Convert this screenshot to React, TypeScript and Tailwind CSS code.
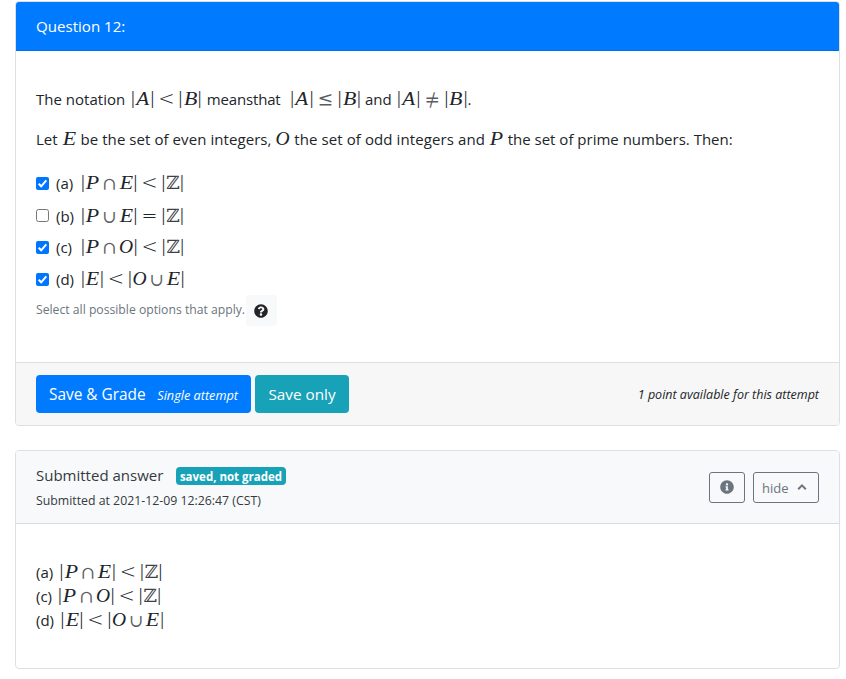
import React from "react";

const slots: Record<string, string> = {
  "|": "w-[4px] text-[19px] font-normal relative -top-px",
  A: "w-[15.5px] italic scale-x-108",
  B: "w-[15.2px] italic scale-x-112",
  E: "w-[15px] italic scale-x-112",
  O: "w-[15.2px] italic",
  P: "w-[15px] italic scale-x-112",
  ℤ: "w-[14.5px] font-['DejaVu_Math_TeX_Gyre','DejaVu_Sans'] text-[18.5px] text-[#3c4044]",
  "<": "w-[24px] font-['DejaVu_Sans'] text-[19.5px] font-extralight",
  "≤": "w-[24px] font-['DejaVu_Math_TeX_Gyre','DejaVu_Sans'] text-[18.5px] text-[#5a5e62]",
  "≠": "w-[24px] font-['DejaVu_Math_TeX_Gyre','DejaVu_Sans'] text-[18.5px] text-[#5a5e62]",
  "=": "w-[24px] font-['DejaVu_Sans'] text-[19px] font-extralight",
  "∩": "w-[18.5px] font-['DejaVu_Math_TeX_Gyre','DejaVu_Sans'] text-[17px] text-[#5a5e62]",
  "∪": "w-[18.5px] font-['DejaVu_Math_TeX_Gyre','DejaVu_Sans'] text-[17px] text-[#5a5e62]",
};

function Tex({ children }: { children: string }) {
  return (
    <span className="inline-flex h-6 shrink-0 items-baseline font-['Liberation_Serif',serif] text-[19.5px] leading-6 tracking-normal">
      {Array.from(children).map((c, i) => (
        <span key={i} className={`flex h-6 shrink-0 justify-center leading-6 ${slots[c]}`}>{c}</span>
      ))}
    </span>
  );
}

function Check({ on }: { on?: boolean }) {
  return on ? (
    <svg viewBox="0 0 13 13" className="h-[13px] w-[13px]">
      <rect width="13" height="13" rx="2" fill="#0075ff" />
      <path d="M2.7 6.8 5.2 9.3 10.3 3.4" fill="none" stroke="#fff" strokeWidth="2" />
    </svg>
  ) : (
    <span className="h-[13px] w-[13px] rounded-[2.5px] border border-[#767676] bg-white" />
  );
}

function Option({ label, tex, on }: { label: string; tex: string; on?: boolean }) {
  return (
    <div className="flex h-8 items-center">
      <Check on={on} />
      <div className="ml-[7px] flex h-6 items-baseline">
        <span className="w-[25px] text-[15px] leading-6">{label}</span>
        <Tex>{tex}</Tex>
      </div>
    </div>
  );
}

function Answer({ label, tex, slot }: { label: string; tex: string; slot: string }) {
  return (
    <div className="flex h-6 items-baseline">
      <span className={`leading-6 ${slot}`}>{label}</span>
      <Tex>{tex}</Tex>
    </div>
  );
}

export default function App() {
  return (
    <div className="h-[679px] w-[846px] overflow-hidden bg-white pt-px pl-[15px] font-['Open_Sans','Noto_Sans',sans-serif] text-[15px] leading-6 whitespace-nowrap text-[#212529]">
      <section className="flex h-[425px] w-[825px] flex-col overflow-hidden rounded-[4px] border border-[#dfdfdf]">
        <header className="h-[49px] shrink-0 border-b border-[#006fe6] bg-[#007bff] px-5 pt-3 text-[15.1px] text-white">Question 12:</header>
        <div className="flex-1 px-5 pt-[36px]">
          <p className="flex h-6 items-baseline">
            <span className="w-[95px] tracking-[0.02px]">The notation</span>
            <Tex>{"|A|<|B|"}</Tex>
            <span className="ml-[5px] w-[83.5px] tracking-[-0.15px]">meansthat</span>
            <Tex>{"|A|≤|B|"}</Tex>
            <span className="ml-[4px] w-[32px]">and</span>
            <Tex>{"|A|≠|B|"}</Tex>
            <span>.</span>
          </p>
          <p className="mt-4 flex h-6 items-baseline">
            <span className="w-[26px]">Let</span>
            <Tex>E</Tex>
            <span className="ml-[3.5px] w-[194.5px] tracking-[0.07px]">be the set of even integers,</span>
            <Tex>O</Tex>
            <span className="ml-[4px] w-[195px] tracking-[0.1px]">the set of odd integers and</span>
            <Tex>P</Tex>
            <span className="ml-[3.5px]">the set of prime numbers. Then:</span>
          </p>
          <div className="mt-4">
            <Option on label="(a)" tex="|P∩E|<|ℤ|" />
            <Option label="(b)" tex="|P∪E|=|ℤ|" />
            <Option on label="(c)" tex="|P∩O|<|ℤ|" />
            <Option on label="(d)" tex="|E|<|O∪E|" />
          </div>
          <div className="flex h-[30px] items-center text-[12.2px] text-[#6c757d]">
            <span className="w-[210px]">Select all possible options that apply.</span>
            <span className="mt-px flex h-[31px] w-[31px] items-center justify-center rounded-[3px] bg-[#f8f9fa]">
              <svg viewBox="0 0 512 512" className="mt-px mr-px h-[14px] w-[14px]" fill="#212529">
                <path d="M504 256c0 136.997-111.043 248-248 248S8 392.997 8 256C8 119.083 119.043 8 256 8s248 111.083 248 248zM262.655 90c-54.497 0-89.255 22.957-116.549 63.758-3.536 5.286-2.353 12.415 2.715 16.258l34.699 26.31c5.205 3.947 12.621 3.008 16.665-2.122 17.864-22.658 30.113-35.797 57.303-35.797 20.429 0 45.698 13.148 45.698 32.958 0 14.976-12.363 22.667-32.534 33.976C247.128 238.528 216 254.941 216 296v4c0 6.627 5.373 12 12 12h56c6.627 0 12-5.373 12-12v-1.333c0-28.462 83.186-29.647 83.186-106.667 0-58.002-60.165-102-116.531-102zM256 338c-25.365 0-46 20.635-46 46 0 25.364 20.635 46 46 46s46-20.636 46-46c0-25.365-20.635-46-46-46z" />
              </svg>
            </span>
          </div>
        </div>
        <footer className="flex h-[63px] shrink-0 items-center border-t border-[#dfdfdf] bg-[#f7f7f7] px-5">
          <button className="flex h-[38px] w-[215px] items-baseline rounded-[4px] bg-[#007bff] px-[13px] pt-2 text-white">
            <span className="w-[109px] text-left text-[15.4px]">Save &amp; Grade</span>
            <span className="text-[12.7px] italic">Single attempt</span>
          </button>
          <button className="ml-1 flex h-[38px] w-[94px] justify-center rounded-[4px] bg-[#17a2b8] pt-[7px] text-[15.3px] text-white">Save only</button>
          <span className="ml-auto pt-px text-[12.5px] italic">1 point available for this attempt</span>
        </footer>
      </section>

      <section className="mt-6 flex h-[219px] w-[825px] flex-col overflow-hidden rounded-[4px] border border-[#dfdfdf]">
        <header className="flex h-[73px] shrink-0 items-center border-b border-[#d9dbdd] bg-[#f8f9fa] px-5 text-[#343a40]">
          <div>
            <div className="flex h-6 items-center">
              <span className="w-[140px]">Submitted answer</span>
              <span className="mt-px flex h-[18px] w-[110px] items-center justify-center rounded-[4px] bg-[#17a2b8] pt-0.5 text-[11.5px] font-bold text-white">saved, not graded</span>
            </div>
            <div className="h-6 pt-0.5 text-[12.3px]">Submitted at 2021-12-09 12:26:47 (CST)</div>
          </div>
          <button className="ml-auto flex h-[31px] w-9 items-center justify-center rounded-[3px] border border-[#6c757d]">
            <svg viewBox="0 0 512 512" className="h-[14px] w-[14px]" fill="#6c757d">
              <path d="M256 8C119.043 8 8 119.083 8 256c0 136.997 111.043 248 248 248s248-111.003 248-248C504 119.083 392.957 8 256 8zm0 110c23.196 0 42 18.804 42 42s-18.804 42-42 42-42-18.804-42-42 18.804-42 42-42zm56 254c0 6.627-5.373 12-12 12h-88c-6.627 0-12-5.373-12-12v-24c0-6.627 5.373-12 12-12h12v-64h-12c-6.627 0-12-5.373-12-12v-24c0-6.627 5.373-12 12-12h64c6.627 0 12 5.373 12 12v100h12c6.627 0 12 5.373 12 12v24z" />
            </svg>
          </button>
          <button className="ml-2 flex h-[31px] w-[66px] items-center rounded-[3px] border border-[#6c757d] pl-2 text-[13px] text-[#6c757d]">
            <span className="w-[35px] pt-0.5 text-left">hide</span>
            <svg viewBox="0 0 10 8" className="h-2 w-[10px]"><path d="M1.2 6.2 5 2.4 8.8 6.2" fill="none" stroke="#6c757d" strokeWidth="2" /></svg>
          </button>
        </header>
        <div className="px-5 pt-[36px]">
          <Answer label="(a)" tex="|P∩E|<|ℤ|" slot="w-[23.5px]" />
          <Answer label="(c)" tex="|P∩O|<|ℤ|" slot="w-[22px]" />
          <Answer label="(d)" tex="|E|<|O∪E|" slot="w-[24.5px]" />
        </div>
      </section>
    </div>
  );
}
